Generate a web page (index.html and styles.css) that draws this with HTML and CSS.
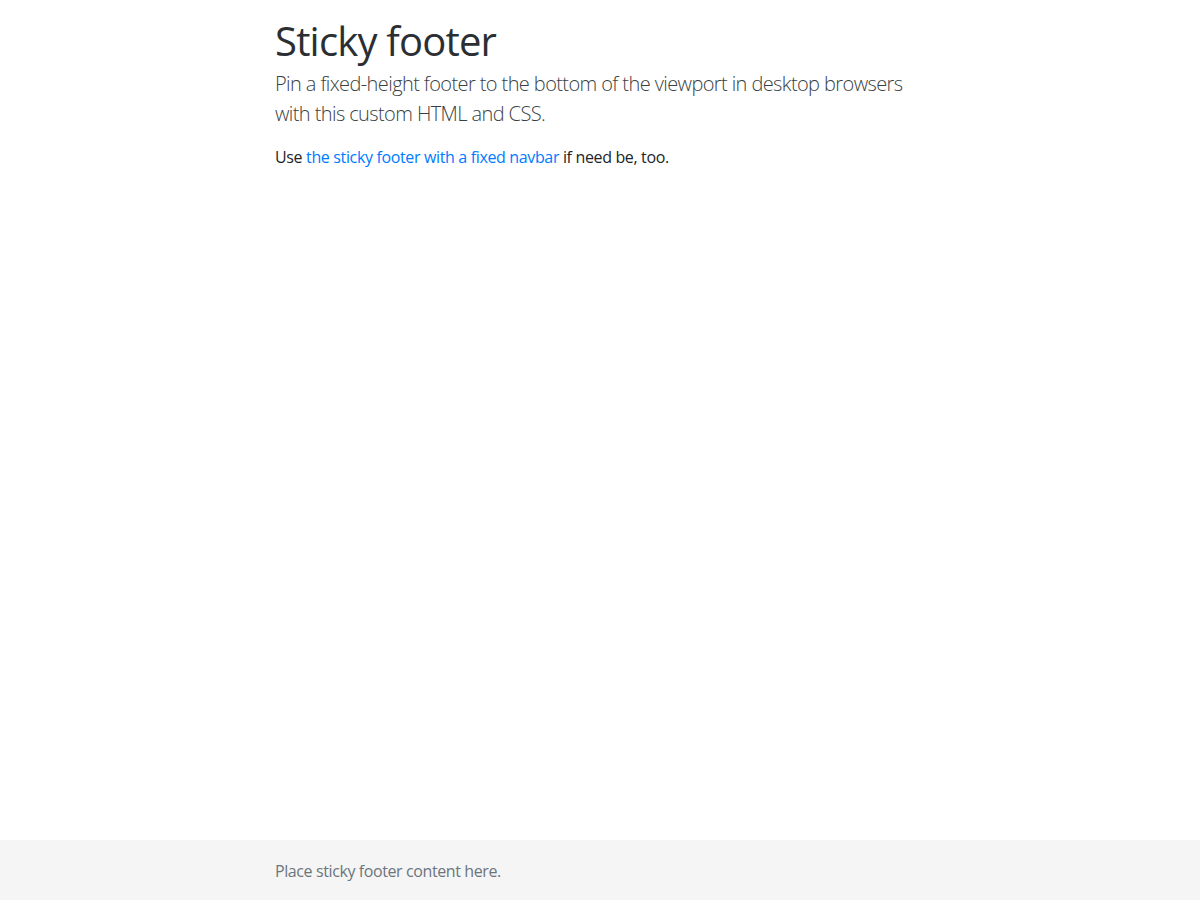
FILE: index.html
```html
<!DOCTYPE html>
<html lang="en">
<head>
<meta charset="utf-8">
<title>Sticky Footer Template</title>
<link rel="stylesheet" href="styles.css">
</head>
<body class="page">
<main class="main">
  <div class="container">
    <h1 class="title">Sticky footer</h1>
    <p class="lead">Pin a fixed-height footer to the bottom of the viewport in desktop browsers with this custom HTML and CSS.</p>
    <p class="text">Use <a class="link" href="#">the sticky footer with a fixed navbar</a> if need be, too.</p>
  </div>
</main>
<footer class="footer">
  <div class="container">
    <span class="muted">Place sticky footer content here.</span>
  </div>
</footer>
</body>
</html>
```

FILE: styles.css
```css
*, *::before, *::after { box-sizing: border-box; }
html { height: 100%; }
.page {
  margin: 0;
  min-height: 100%;
  display: flex;
  flex-direction: column;
  font-family: "Open Sans", "Noto Sans", sans-serif;
  font-size: 16px;
  line-height: 1.5;
  color: #212529;
  background: #fff;
}
.main { flex: 1 0 auto; }
.container {
  max-width: 680px;
  margin: 0 auto;
  padding: 0 15px;
}
.title {
  margin: 17px 0 4px;
  font-size: 40px;
  font-weight: 500;
  line-height: 1.2;
  letter-spacing: -0.02em;
  color: #2b2f33;
}
.lead {
  margin: 0 0 16px;
  font-size: 20px;
  font-weight: 300;
  letter-spacing: -0.03em;
  line-height: 30px;
  color: #3a3f44;
}
.text {
  margin: 0 0 16px;
  font-size: 16px;
  letter-spacing: -0.022em;
}
.link { color: #007bff; text-decoration: none; }
.footer {
  flex-shrink: 0;
  height: 60px;
  padding-top: 2px;
  line-height: 58px;
  background: #f5f5f5;
}
.muted { color: #6c757d; letter-spacing: -0.025em; }
```
